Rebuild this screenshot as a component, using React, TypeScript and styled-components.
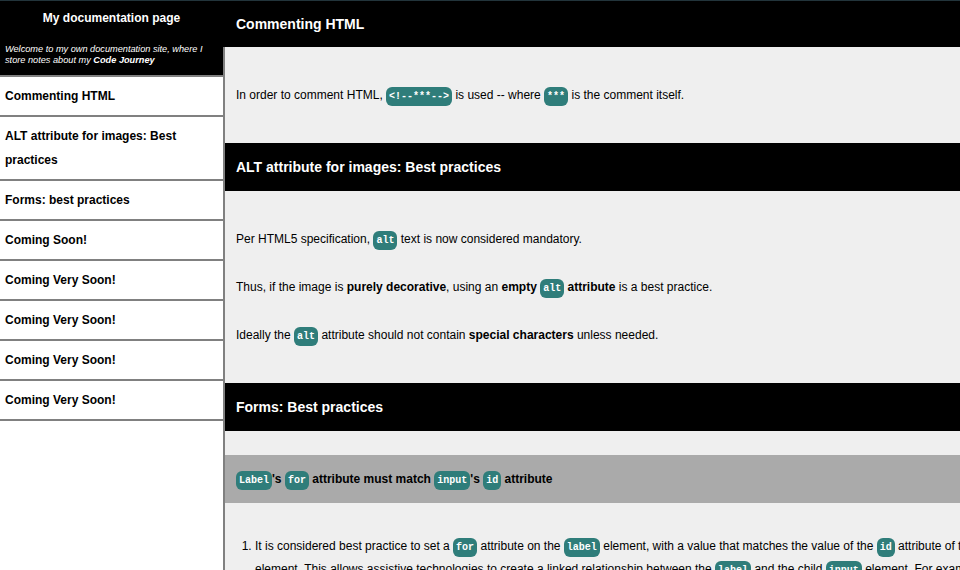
import React from 'react';
import styled, { createGlobalStyle } from 'styled-components';

const GlobalStyle = createGlobalStyle`
  html, body {
    margin: 0;
    padding: 0;
    overflow: hidden;
    background: #ffffff;
  }
  body {
    font-family: "Liberation Sans", Arial, sans-serif;
    color: #000000;
  }
`;

const TopLine = styled.div`
  height: 1px;
  width: 1072px;
  background: #22343b;
`;

const Page = styled.div`
  display: flex;
  width: 1072px;
  min-height: 569px;
`;

const Sidebar = styled.nav`
  width: 223px;
  flex-shrink: 0;
  background: #ffffff;
  border-right: 2px solid #808080;
`;

const SideHeader = styled.header`
  background: #000000;
  color: #ffffff;
  padding: 10px 5px 9px;
`;

const SideTitle = styled.h1`
  margin: 0;
  font-size: 12px;
  line-height: 14px;
  font-weight: bold;
  text-align: center;
`;

const SideIntro = styled.p`
  margin: 19px 0 0;
  font-size: 9.2px;
  line-height: 11px;
  font-style: italic;
`;

const NavList = styled.ul`
  list-style: none;
  margin: 0;
  padding: 0;
  border-bottom: 2px solid #808080;
`;

const NavItem = styled.li`
  border-top: 2px solid #808080;
`;

const NavLink = styled.a`
  display: block;
  padding: 7px 5px;
  font-size: 12px;
  line-height: 24px;
  font-weight: bold;
  color: #000000;
  text-decoration: none;
`;

const Main = styled.main`
  flex: 1;
  background: #efefef;
`;

const Section = styled.section``;

const SectionHeader = styled.header<{ $first?: boolean }>`
  background: #000000;
  color: #ffffff;
  height: ${(p) => (p.$first ? 46 : 48)}px;
  line-height: ${(p) => (p.$first ? 46 : 48)}px;
  padding: 0 11px;
  font-size: 14px;
  font-weight: bold;
  ${(p) => (p.$first ? 'margin-left: -2px; padding-left: 13px;' : '')}
`;

const Content = styled.div`
  padding: 12px 11px;
`;

const FormsContent = styled.div`
  padding: 24px 0;
`;

const Para = styled.p`
  margin: 24px 0;
  font-size: 12px;
  line-height: 24px;
`;

const SubHeader = styled.h3`
  margin: 0;
  background: #aaaaaa;
  height: 48px;
  line-height: 48px;
  padding: 0 11px;
  font-size: 12px;
  font-weight: bold;
`;

const Steps = styled.ol`
  margin: 32px 0 0;
  padding: 0 11px 0 30px;
  font-size: 12px;
  line-height: 23px;
`;

const Step = styled.li`
  margin-bottom: 16px;
`;

const Code = styled.code`
  background: #2f7d7a;
  color: #ffffff;
  font-family: "Liberation Mono", "Courier New", monospace;
  font-weight: bold;
  font-size: 10px;
  line-height: 10px;
  padding: 4px 3px;
  border-radius: 6px;
`;

const navItems = [
  { id: 'Commenting_HTML', label: 'Commenting HTML' },
  { id: 'ALT_attribute', label: 'ALT attribute for images: Best practices' },
  { id: 'Forms', label: 'Forms: best practices' },
  { id: 'Coming_Soon', label: 'Coming Soon!' },
  { id: 'Coming_Very_Soon_1', label: 'Coming Very Soon!' },
  { id: 'Coming_Very_Soon_2', label: 'Coming Very Soon!' },
  { id: 'Coming_Very_Soon_3', label: 'Coming Very Soon!' },
  { id: 'Coming_Very_Soon_4', label: 'Coming Very Soon!' },
];

export default function App() {
  return (
    <>
      <GlobalStyle />
      <TopLine />
      <Page>
        <Sidebar id="navbar">
          <SideHeader>
            <SideTitle>My documentation page</SideTitle>
            <SideIntro>
              Welcome to my own documentation site, where I store notes about my <b>Code Journey</b>
            </SideIntro>
          </SideHeader>
          <NavList>
            {navItems.map((item, i) => (
              <NavItem key={i}>
                <NavLink href={`#${item.id}`}>{item.label}</NavLink>
              </NavItem>
            ))}
          </NavList>
        </Sidebar>
        <Main id="main-doc">
          <Section id="Commenting_HTML">
            <SectionHeader $first>Commenting HTML</SectionHeader>
            <Content>
              <Para>
                In order to comment HTML, <Code>{'<!--***-->'}</Code> is used -- where <Code>***</Code> is the comment itself.
              </Para>
            </Content>
          </Section>
          <Section id="ALT_attribute">
            <SectionHeader>ALT attribute for images: Best practices</SectionHeader>
            <Content>
              <Para>
                Per HTML5 specification, <Code>alt</Code> text is now considered mandatory.
              </Para>
              <Para>
                Thus, if the image is <b>purely decorative</b>, using an <b>empty</b> <Code>alt</Code> <b>attribute</b> is a best practice.
              </Para>
              <Para>
                Ideally the <Code>alt</Code> attribute should not contain <b>special characters</b> unless needed.
              </Para>
            </Content>
          </Section>
          <Section id="Forms">
            <SectionHeader>Forms: Best practices</SectionHeader>
            <FormsContent>
              <SubHeader>
                <Code>Label</Code>'s <Code>for</Code> attribute must match <Code>input</Code>'s <Code>id</Code> attribute
              </SubHeader>
              <Steps>
                <Step>
                  It is considered best practice to set a <Code>for</Code> attribute on the <Code>label</Code> element, with a value that matches the value of the <Code>id</Code> attribute of the <Code>input</Code> element. This allows assistive technologies to create a linked relationship between the <Code>label</Code> and the child <Code>input</Code> element. For example, clicking the label will focus the associated field.
                </Step>
                <Step>
                  Wrapping the <Code>input</Code> inside its <Code>label</Code> also creates an implicit association, but an explicit <Code>for</Code> is still recommended.
                </Step>
              </Steps>
            </FormsContent>
          </Section>
        </Main>
      </Page>
    </>
  );
}
